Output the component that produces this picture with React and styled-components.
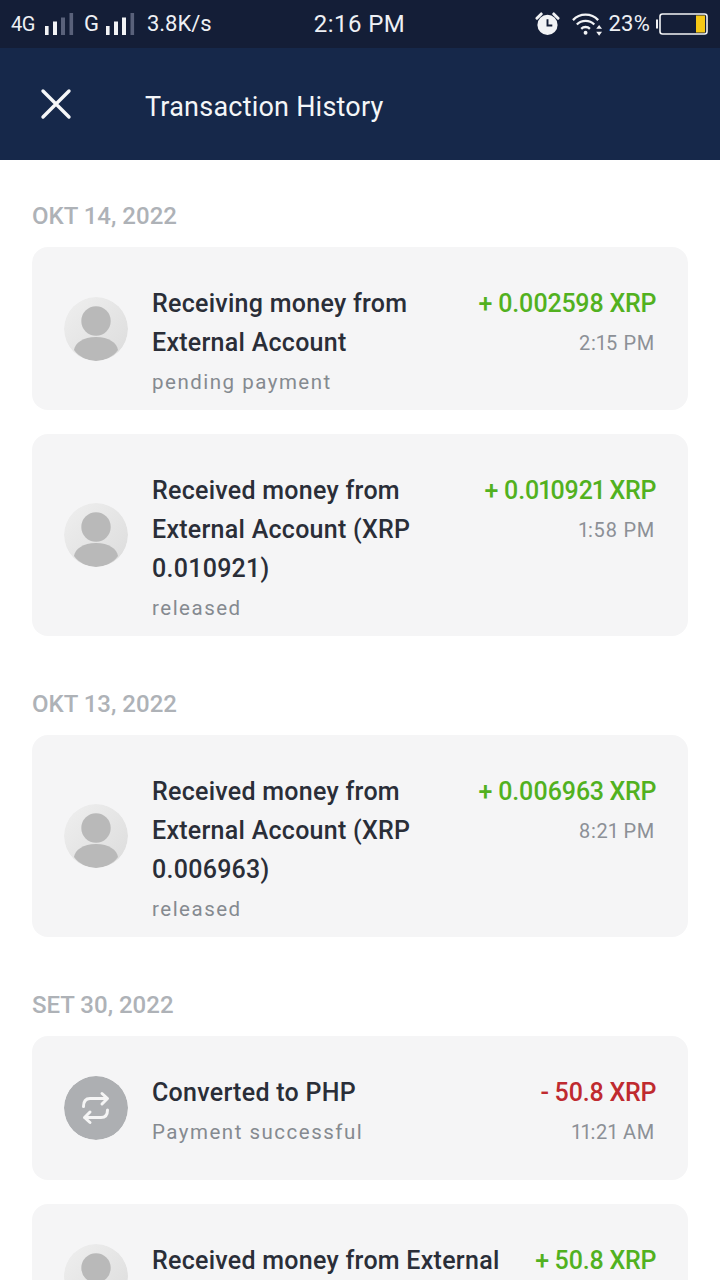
import React from "react";
import styled, { createGlobalStyle } from "styled-components";

const Global = createGlobalStyle`
  html, body { margin: 0; padding: 0; background: #fff; }
  body { width: 720px; height: 1280px; overflow: hidden; font-family: Roboto, "Liberation Sans", sans-serif; }
  * { box-sizing: border-box; }
`;

const Page = styled.div`
  width: 720px;
  height: 1280px;
  overflow: hidden;
  display: flex;
  flex-direction: column;
`;
const StatusBar = styled.div`
  height: 48px;
  flex: none;
  background: #141e37;
  color: #eef0f4;
  display: grid;
  grid-template-columns: 1fr auto 1fr;
  align-items: center;
  padding: 0 12px 0 11px;
`;
const StatusGroup = styled.div`
  display: flex;
  align-items: center;
  justify-content: ${(p) => (p.$end ? "flex-end" : "flex-start")};
`;
const StatusText = styled.span`
  font-size: ${(p) => p.$size || 22}px;
  line-height: 26px;
  letter-spacing: ${(p) => p.$ls || 0}px;
  margin-left: ${(p) => p.$ml || 0}px;
  margin-right: ${(p) => p.$mr || 0}px;
`;
const Clock = styled.span`
  font-size: 24px;
  line-height: 26px;
  letter-spacing: 0.45px;
`;
const AlarmSlot = styled.div`
  display: flex;
  margin-right: 12px;
`;
const Header = styled.header`
  height: 112px;
  flex: none;
  background: #16284a;
  display: flex;
  align-items: center;
  padding-left: 40px;
  gap: 73px;
  color: #f4f6f8;
`;
const CloseButton = styled.div`
  width: 32px;
  height: 32px;
  display: flex;
`;
const Title = styled.h1`
  margin: 5px 0 0;
  font-size: 27px;
  font-weight: 400;
  letter-spacing: 0.22px;
`;
const Content = styled.main`
  padding: 41px 32px 0;
  display: flex;
  flex-direction: column;
`;
const DateLabel = styled.div`
  font-size: 24px;
  font-weight: 500;
  line-height: 30px;
  color: #aeb2b7;
  margin-bottom: 16px;
  margin-top: ${(p) => (p.$first ? 0 : 53)}px;
`;
const Card = styled.article`
  flex: none;
  min-height: 144px;
  background: #f5f5f6;
  border-radius: 16px;
  padding: 18px 32px;
  display: flex;
  align-items: center;
  gap: 24px;
  & + & { margin-top: 24px; }
`;
const Body = styled.div`
  flex: 1;
  align-self: flex-start;
  padding-top: 19px;
`;
const Name = styled.div`
  font-size: 25px;
  font-weight: 500;
  line-height: 39px;
  letter-spacing: 0.27px;
  color: #2a2e38;
`;
const Note = styled.div`
  margin-top: 10px;
  font-size: 20.5px;
  line-height: 20px;
  letter-spacing: 1.5px;
  color: #858a90;
`;
const Side = styled.div`
  align-self: flex-start;
  padding-top: 19px;
  text-align: right;
  white-space: nowrap;
  font-variant-numeric: proportional-nums;
`;
const Amount = styled.div`
  font-size: 25px;
  font-weight: 500;
  line-height: 39px;
  letter-spacing: -0.35px;
  color: ${(p) => (p.$neg ? "#bf2a2f" : "#52b11f")};
`;
const Time = styled.div`
  font-size: 20px;
  line-height: 41px;
  letter-spacing: 0.7px;
  color: #8c9096;
  padding-right: 1px;
`;
const IconBox = styled.div`
  width: 64px;
  height: 64px;
  flex: none;
  border-radius: 50%;
  overflow: hidden;
`;

const Signal = ({ dim, w }) => (
  <svg width={w} height="24" viewBox={`0 0 ${w} 24`} fill="#f2f3f5">
    <rect x="0" y="14" width="3.6" height="9" />
    <rect x="8" y="9.5" width="4" height="13.5" />
    <rect x="16" y="5.5" width="4" height="17.5" fill={dim > 1 ? "#59617a" : "#f2f3f5"} />
    <rect x="24.5" y="1" width="3.6" height="22" fill="#59617a" />
  </svg>
);
const Alarm = () => (
  <svg width="25" height="26" viewBox="0 0 26 26">
    <path d="M2 7 6.5 2.5 M24 7 19.5 2.5" stroke="#f2f3f5" strokeWidth="3" strokeLinecap="round" />
    <circle cx="13" cy="14" r="10.5" fill="#f2f3f5" />
    <path d="M13 8v6.5h5" fill="none" stroke="#141e37" strokeWidth="2" />
  </svg>
);
const Wifi = () => (
  <svg width="31" height="26" viewBox="0 0 32 26" fill="none" stroke="#f2f3f5" strokeWidth="2.4">
    <path d="M1 9C8 1.5 20 1.5 27 9" />
    <path d="M5 13.5C10 8.5 18 8.5 23 13.5" />
    <path d="M9.5 18C12 15.5 16 15.5 18.5 18" />
    <circle cx="14" cy="22" r="2" fill="#f2f3f5" stroke="none" />
    <path d="M28 14l3 4h-6zM28 25l3-4h-6z" fill="#f2f3f5" stroke="none" />
  </svg>
);
const Battery = () => (
  <svg width="52" height="22" viewBox="0 0 52 22">
    <path d="M1 6.5v9" stroke="#f2f3f5" strokeWidth="2" />
    <rect x="4" y="1" width="47" height="20" rx="2.5" fill="none" stroke="#f2f3f5" strokeWidth="1.6" />
    <rect x="40" y="2.5" width="9" height="17" fill="#f6c816" />
  </svg>
);
const CloseIcon = () => (
  <svg width="32" height="32" viewBox="0 0 32 32" stroke="#f6f7f9" strokeWidth="3.4" strokeLinecap="round">
    <path d="M3 3 29 29 M29 3 3 29" />
  </svg>
);
const Avatar = () => (
  <IconBox>
    <svg width="64" height="64" viewBox="0 0 64 64">
      <defs>
        <linearGradient id="avatarBg" x1="0" y1="0" x2="1" y2="1">
          <stop offset="0" stopColor="#efefef" />
          <stop offset="1" stopColor="#dcdcdc" />
        </linearGradient>
      </defs>
      <circle cx="32" cy="32" r="32" fill="url(#avatarBg)" />
      <circle cx="32" cy="24" r="14.7" fill="#b9b9b9" />
      <path d="M10 53C11 46 19 40 32 40C45 40 53 46 54 53C49 60 40 64 32 64C24 64 15 60 10 53Z" fill="#b9b9b9" />
    </svg>
  </IconBox>
);
const Convert = () => (
  <IconBox>
    <svg width="64" height="64" viewBox="0 0 64 64">
      <circle cx="32" cy="32" r="32" fill="#adafb2" />
      <path d="M19.5 30.5C19.5 25 21.5 22.5 26 22.5H43M38 17.5 43.5 22.5 38 28" fill="none" stroke="#f5f5f5" strokeWidth="3" strokeLinecap="round" strokeLinejoin="round" />
      <path d="M43.5 34C43.5 39 41.5 41.5 37 41.5H20.5M26 36 20.5 41.5 26 46.5" fill="none" stroke="#f5f5f5" strokeWidth="3" strokeLinecap="round" strokeLinejoin="round" />
    </svg>
  </IconBox>
);

const Row = ({ icon, lines, note, amount, time, neg }) => (
  <Card>
    {icon === "convert" ? <Convert /> : <Avatar />}
    <Body>
      <Name>
        {lines.map((l, i) => (
          <React.Fragment key={i}>
            {i > 0 && <br />}
            {l}
          </React.Fragment>
        ))}
      </Name>
      {note && <Note>{note}</Note>}
    </Body>
    <Side>
      <Amount $neg={neg}>{amount}</Amount>
      {time && <Time>{time}</Time>}
    </Side>
  </Card>
);

export default function App() {
  return (
    <Page>
      <Global />
      <StatusBar>
        <StatusGroup>
          <StatusText $size={20} $ls={-0.5} $mr={10}>4G</StatusText>
          <Signal dim={2} w={29} />
          <StatusText $ml={10} $mr={7}>G</StatusText>
          <Signal dim={1} w={29} />
          <StatusText $ml={12}>3.8K/s</StatusText>
        </StatusGroup>
        <Clock>2:16 PM</Clock>
        <StatusGroup $end>
          <AlarmSlot><Alarm /></AlarmSlot>
          <Wifi />
          <StatusText $ml={6} $mr={6} $ls={0.2}>23%</StatusText>
          <Battery />
        </StatusGroup>
      </StatusBar>
      <Header>
        <CloseButton><CloseIcon /></CloseButton>
        <Title>Transaction History</Title>
      </Header>
      <Content>
        <DateLabel $first>OKT 14, 2022</DateLabel>
        <Row lines={["Receiving money from", "External Account"]} note="pending payment" amount="+ 0.002598 XRP" time="2:15 PM" />
        <Row lines={["Received money from", "External Account (XRP", "0.010921)"]} note="released" amount="+ 0.010921 XRP" time="1:58 PM" />
        <DateLabel>OKT 13, 2022</DateLabel>
        <Row lines={["Received money from", "External Account (XRP", "0.006963)"]} note="released" amount="+ 0.006963 XRP" time="8:21 PM" />
        <DateLabel>SET 30, 2022</DateLabel>
        <Row icon="convert" lines={["Converted to PHP"]} note="Payment successful" amount="- 50.8 XRP" time="11:21 AM" neg />
        <Row lines={["Received money from External"]} amount="+ 50.8 XRP" />
      </Content>
    </Page>
  );
}
